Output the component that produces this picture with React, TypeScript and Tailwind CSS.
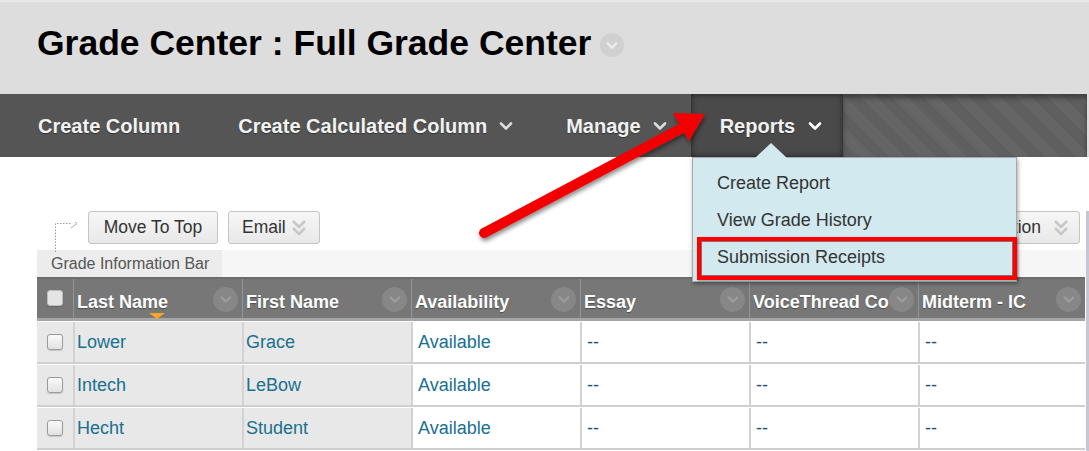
import React from 'react';

const font = { fontFamily: '"Liberation Sans", Arial, sans-serif' };

function Chevron({ className = '' }: { className?: string }) {
  return (
    <svg viewBox="0 0 14 10" className={className} fill="none">
      <polyline points="2,2.5 7,7.5 12,2.5" stroke="currentColor" strokeWidth="2.6" strokeLinecap="round" strokeLinejoin="round" />
    </svg>
  );
}

function DoubleChevron() {
  return (
    <svg viewBox="0 0 16 20" className="w-[16px] h-[20px] text-[#c8c8c8]" fill="none">
      <polyline points="2,3 8,9 14,3" stroke="currentColor" strokeWidth="2.6" strokeLinejoin="round" />
      <polyline points="2,10 8,16 14,10" stroke="currentColor" strokeWidth="2.6" strokeLinejoin="round" />
    </svg>
  );
}

function CircleDrop({ light = false }: { light?: boolean }) {
  return (
    <div
      className={`rounded-full flex items-center justify-center ${
        light ? 'w-[24px] h-[24px] bg-[#d0d0d0] text-[#ececec]' : 'w-[25px] h-[25px] bg-[#878787] text-[#9c9c9c]'
      }`}
    >
      <Chevron className="w-[12px] h-[9px]" />
    </div>
  );
}

function Checkbox({ header = false }: { header?: boolean }) {
  return (
    <div
      className={`w-[16px] h-[16px] rounded-[3px] border ${
        header ? 'border-[#bdbdbd] bg-[#e4e4e4]' : 'border-[#9a9a9a] bg-gradient-to-b from-[#fafafa] to-[#e2e2e2]'
      } shadow-[0_1px_1px_rgba(0,0,0,0.15)]`}
    />
  );
}

const columns = [
  { label: 'Last Name', sorted: true },
  { label: 'First Name' },
  { label: 'Availability' },
  { label: 'Essay' },
  { label: 'VoiceThread Co', clip: true },
  { label: 'Midterm - IC' },
];

const rows = [
  ['Lower', 'Grace'],
  ['Intech', 'LeBow'],
  ['Hecht', 'Student'],
];

const cols = 'grid grid-cols-[36px_169px_169px_169px_169px_169px_167px]';

export default function App() {
  return (
    <div className="relative w-[1089px] h-[451px] overflow-hidden bg-white" style={font}>
      {/* title */}
      <div className="h-[94px] bg-[#dddddd] border-t-2 border-[#e8e8e8] flex items-center pl-[37px] pb-[8px]">
        <h1 className="text-[35.5px] font-bold text-black leading-none">
          Grade Center : Full Grade Center
        </h1>
        <div className="ml-[9px] mt-[2px]">
          <CircleDrop light />
        </div>
      </div>

      {/* action bar */}
      <div className="h-[63px] bg-[#555555] flex items-stretch text-[20px] font-bold text-[#f2f2f2] [text-shadow:0_1px_1px_rgba(0,0,0,0.4)]">
        <div className="flex items-center pl-[38px]">Create Column</div>
        <div className="flex items-center ml-[58px]">
          Create Calculated Column
          <Chevron className="w-[14px] h-[10px] ml-[12px] text-[#dcdcdc]" />
        </div>
        <div className="flex items-center ml-[53px]">
          Manage
          <Chevron className="w-[14px] h-[10px] ml-[12px] text-[#dcdcdc]" />
        </div>
        <div className="relative ml-[24px] w-[152px] bg-[#4a4a4a] flex items-center pl-[29px] shadow-[inset_0_0_6px_rgba(0,0,0,0.55)]">
          Reports
          <Chevron className="w-[14px] h-[10px] ml-[13px] text-white" />
        </div>
        <div className="flex-1 bg-[repeating-linear-gradient(45deg,#5f5f5f_0px,#5f5f5f_11px,#656565_11px,#656565_22px)] shadow-[inset_0_4px_5px_rgba(0,0,0,0.35)]" />
        <div className="w-[2px] bg-[#dddddd]" />
      </div>

      {/* content */}
      <div className="border-r-[3px] border-[#c3c8d2] h-[294px]">
        {/* toolbar */}
        <div className="relative flex items-center h-[33px] mt-[54px] pl-[88px]">
          <svg className="absolute left-[52px] top-[11px] w-[28px] h-[30px]" viewBox="0 0 28 30" fill="none">
            <path d="M3.5 30 V1.5 H20" stroke="#9a9a9a" strokeWidth="1" strokeDasharray="1.5 1.5" />
            <polyline points="19,-3 25,1.5 19,6" stroke="#a8a8a8" strokeWidth="1" />
          </svg>
          <button className="h-[33px] w-[130px] rounded-[3px] border border-[#c4c4c4] bg-gradient-to-b from-[#f7f7f7] to-[#e8e8e8] text-[17.5px] text-[#333]">
            Move To Top
          </button>
          <button className="ml-[10px] h-[33px] w-[92px] rounded-[3px] border border-[#c4c4c4] bg-gradient-to-b from-[#f7f7f7] to-[#e8e8e8] text-[17.5px] text-[#333] flex items-center pl-[13px]">
            Email
            <span className="ml-[5px]">
              <DoubleChevron />
            </span>
          </button>
          <button className="ml-auto mr-[6px] h-[33px] rounded-[3px] border border-[#c4c4c4] bg-gradient-to-b from-[#f7f7f7] to-[#e8e8e8] text-[17.5px] text-[#333] flex items-center pl-[14px] pr-[10px]">
            Layout Position
            <span className="ml-[12px]">
              <DoubleChevron />
            </span>
          </button>
        </div>

        {/* grade info bar */}
        <div className="ml-[37px] mt-[6px] h-[27px] bg-[#f6f6f6] flex">
          <div className="w-[185px] bg-[#ececec] text-[16px] text-[#555] flex items-center pl-[14px]">
            Grade Information Bar
          </div>
        </div>

        {/* table */}
        <div className="ml-[37px] w-[1048px]">
          <div className={`${cols} h-[44px] bg-[#777777] border-t-2 border-[#6c6c6c] border-b-[3px] border-b-[#a6a6a6]`}>
            <div className="flex items-center justify-center pb-[2px]">
              <Checkbox header />
            </div>
            {columns.map((c) => (
              <div key={c.label} className="relative flex items-center border-l border-[#959595] pl-[3px] pr-[4px] text-[18px] font-bold text-white [text-shadow:0_1px_1px_rgba(0,0,0,0.35)]">
                <span className="flex-1 overflow-hidden whitespace-nowrap pt-[7px]">{c.label}</span>
                <div className="pt-[2px]">
                  <CircleDrop />
                </div>
                {c.sorted && (
                  <svg className="absolute left-[75px] top-[34px] w-[16px] h-[6px]" viewBox="0 0 16 6">
                    <polygon points="0,0 16,0 8,6" fill="#f6a623" />
                  </svg>
                )}
              </div>
            ))}
          </div>
          {rows.map(([last, first]) => (
            <div key={last} className={`${cols} h-[43px] border-b-2 border-[#cfcfcf] text-[18px] pt-[1px]`}>
              <div className="bg-[#e8e8e8] flex items-center justify-center">
                <Checkbox />
              </div>
              <div className="bg-[#e8e8e8] border-l-2 border-[#d2d2d2] flex items-center pl-[2px] text-[#19708f]">{last}</div>
              <div className="bg-[#e8e8e8] border-l-2 border-[#d2d2d2] flex items-center pl-[2px] text-[#19708f]">{first}</div>
              <div className="border-l-2 border-[#d2d2d2] flex items-center pl-[5px] text-[#19708f]">Available</div>
              {[0, 1, 2].map((i) => (
                <div key={i} className="border-l-2 border-[#d2d2d2] flex items-center pl-[5px] text-[#1f4e79]">
                  --
                </div>
              ))}
            </div>
          ))}
        </div>
      </div>

      {/* Reports dropdown */}
      <div className="absolute left-[692px] top-[157px] w-[325px] h-[125px] bg-[#d2e9ef] border border-[#a9a9a9] shadow-[1px_2px_4px_rgba(0,0,0,0.35)] pt-[7px] text-[18px] text-[#333]">
        <svg className="absolute left-[62px] top-[-15px] w-[32px] h-[15px]" viewBox="0 0 32 15">
          <polygon points="0,15 16,0 32,15" fill="#d2e9ef" />
        </svg>
        <div className="h-[37px] flex items-center pl-[24px]">Create Report</div>
        <div className="h-[37px] flex items-center pl-[24px]">View Grade History</div>
        <div className="h-[37px] flex items-center pl-[24px]">Submission Receipts</div>
        <div className="absolute left-[4px] top-[79px] w-[320px] h-[43px] border-4 border-[#ff0000] shadow-[inset_0_0_0_1px_rgba(90,0,0,0.55),1px_1px_2px_rgba(0,0,0,0.35)]" />
      </div>

      {/* red arrow */}
      <svg className="absolute left-0 top-0 w-[1089px] h-[451px] pointer-events-none" viewBox="0 0 1089 451">
        <defs>
          <filter id="sh" x="-10%" y="-10%" width="120%" height="130%">
            <feDropShadow dx="1" dy="3" stdDeviation="2" floodColor="#000" floodOpacity="0.45" />
          </filter>
        </defs>
        <g filter="url(#sh)">
          <line x1="484" y1="233" x2="684" y2="127" stroke="#f20000" strokeWidth="10" strokeLinecap="round" />
          <polygon points="705,114 689,141 673,113" fill="#f20000" />
        </g>
      </svg>
    </div>
  );
}
